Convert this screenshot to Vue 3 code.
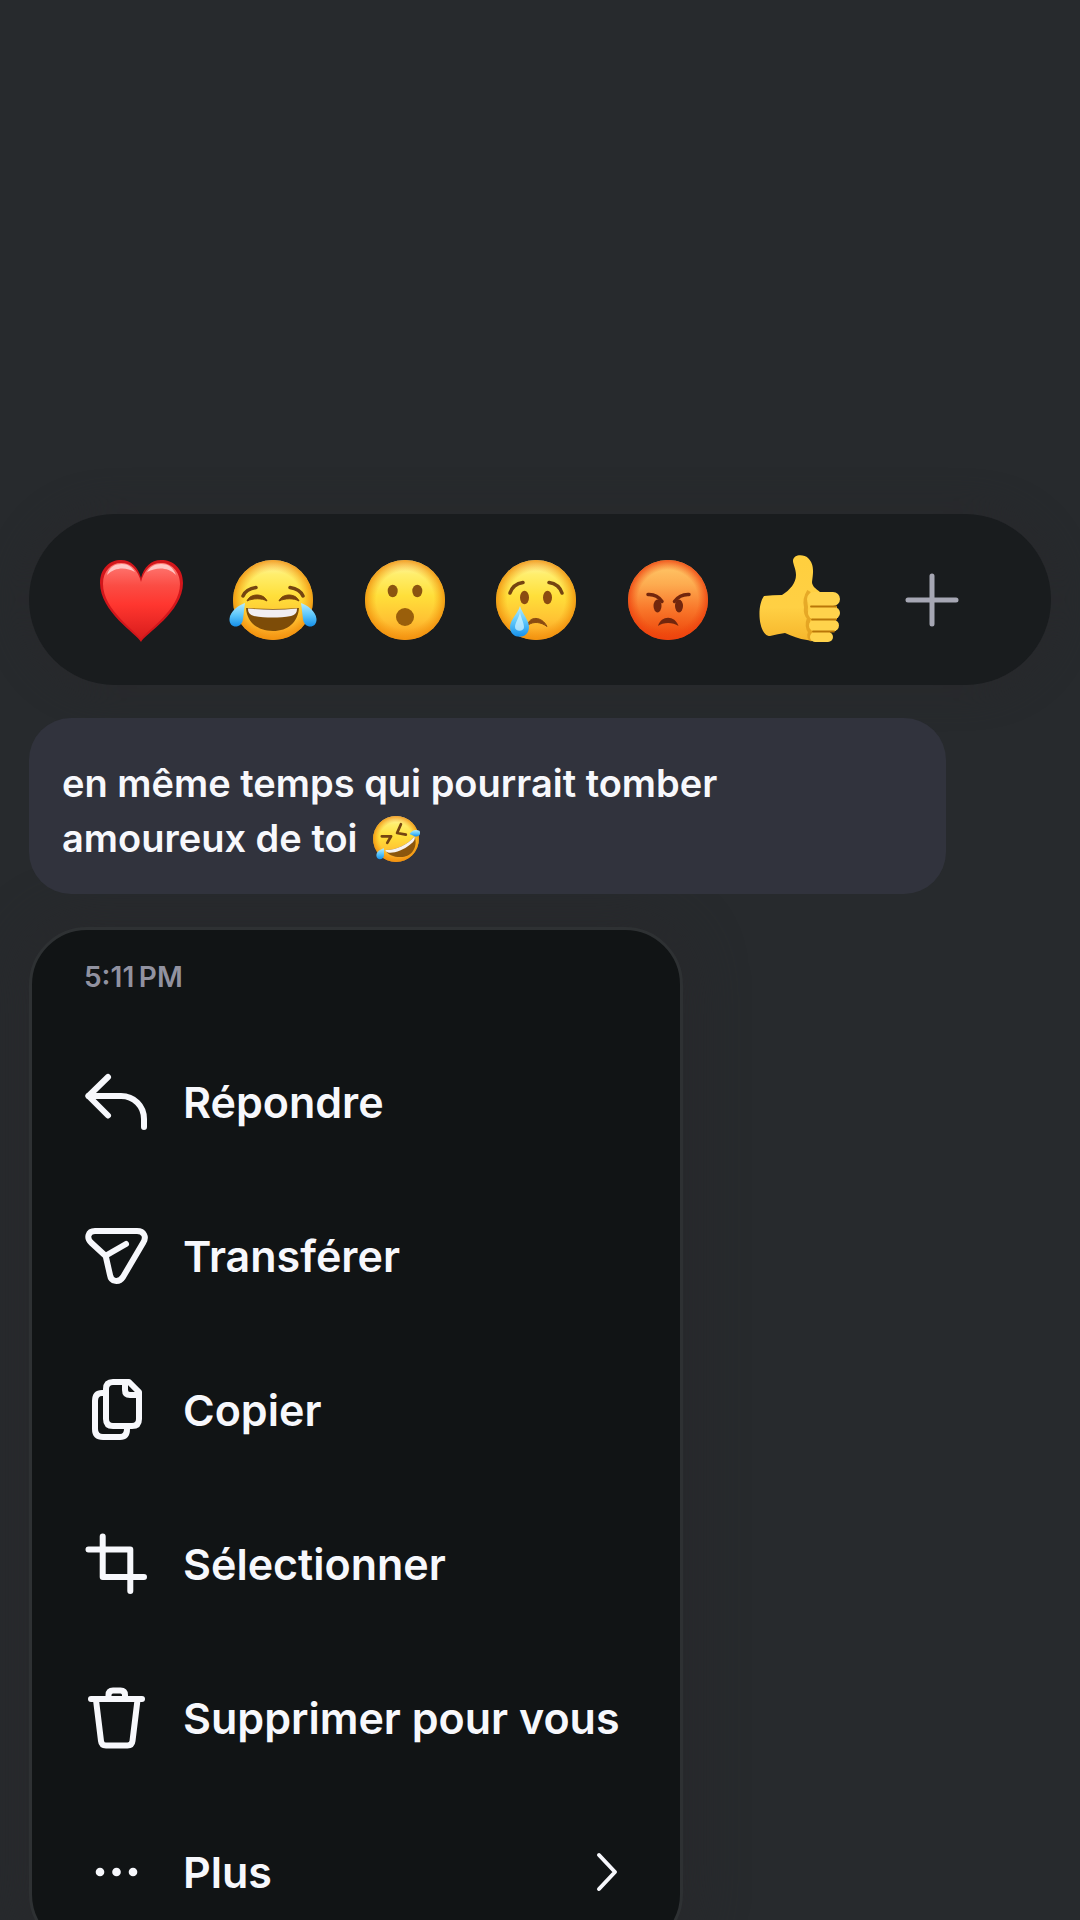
<template>
  <main class="overlay">
    <svg class="defs" width="0" height="0" aria-hidden="true">
      <defs>
        <linearGradient id="face" x1="0" y1="0" x2="0" y2="1">
          <stop offset="0" stop-color="#fff6b4" />
          <stop offset="0.18" stop-color="#ffee6c" />
          <stop offset="0.45" stop-color="#ffdf3a" />
          <stop offset="0.75" stop-color="#ffc233" />
          <stop offset="1" stop-color="#f99a1c" />
        </linearGradient>
        <radialGradient id="rim" cx="0.5" cy="0.5" r="0.5">
          <stop offset="0.72" stop-color="#f59a10" stop-opacity="0" />
          <stop offset="1" stop-color="#f0900c" stop-opacity="0.85" />
        </radialGradient>
        <linearGradient id="anger" x1="0" y1="0" x2="0" y2="1">
          <stop offset="0" stop-color="#ffcc6c" />
          <stop offset="0.3" stop-color="#fdac50" />
          <stop offset="0.6" stop-color="#f9792c" />
          <stop offset="1" stop-color="#ec4107" />
        </linearGradient>
        <radialGradient id="anger-rim" cx="0.5" cy="0.5" r="0.5">
          <stop offset="0.75" stop-color="#f04a10" stop-opacity="0" />
          <stop offset="1" stop-color="#ee4310" stop-opacity="0.85" />
        </radialGradient>
        <linearGradient id="tear" x1="0" y1="0" x2="0" y2="1">
          <stop offset="0" stop-color="#b5ecff" />
          <stop offset="0.5" stop-color="#5fc8fb" />
          <stop offset="1" stop-color="#1690ea" />
        </linearGradient>
        <linearGradient id="heart" x1="0" y1="0" x2="0" y2="1">
          <stop offset="0" stop-color="#ff7a74" />
          <stop offset="0.3" stop-color="#fb4c44" />
          <stop offset="0.55" stop-color="#ff362f" />
          <stop offset="1" stop-color="#d81c1c" />
        </linearGradient>
        <linearGradient id="hand" x1="0" y1="0" x2="0" y2="1">
          <stop offset="0" stop-color="#ffcf3e" />
          <stop offset="0.6" stop-color="#ffd044" />
          <stop offset="1" stop-color="#f6b52b" />
        </linearGradient>
      </defs>
    </svg>

    <div class="reactions">
      <button class="reaction" aria-label="J’adore">
        <svg viewBox="0 0 88 88">
          <path d="M44 86C40 78 3 56 3 27C3 12 13 4 24 4C34 4 41 11 44 22C47 11 54 4 64 4C76 4 86 12 86 27C86 56 48 78 44 86Z" fill="#d3161b" />
          <path d="M44 83C39 75 6 54 6 28C6 15 14 7 24 7C34 7 41 14 44 26C47 14 54 7 64 7C74 7 83 15 83 28C83 54 49 75 44 83Z" fill="url(#heart)" />
          <path d="M10 19C12 11 18 8 25 8C31 8 35 11 38 16C29 11 18 11 10 19ZM50 16C53 11 57 8 64 8C71 8 76 11 79 19C71 11 60 11 50 16Z" fill="#fff" opacity="0.6" />
        </svg>
      </button>
      <button class="reaction" aria-label="Haha">
        <svg viewBox="0 0 88 88">
          <circle cx="44" cy="44" r="40" fill="url(#face)" />
          <circle cx="44" cy="44" r="40" fill="url(#rim)" />
          <path d="M14 40Q17 33 27 31.500M61 31.500Q71 33 74 40" class="feature" />
          <path d="M18 45C21 37 35 37 38 45C33 42 24 42 18 45ZM50 45C53 37 67 37 70 45C65 42 56 42 50 45Z" fill="#79450b" stroke="#79450b" stroke-linejoin="round" />
          <path d="M17 52Q44 54 70 52C69 66 59 75 44 75C28 75 18 66 17 52Z" fill="#7d4c08" />
          <path d="M19 52.500Q44 55 68 52.500C68 57 66 59 62 60C50 62 37 62 25 60C21 59 19 57 19 52.500Z" fill="#f1eef2" />
          <path d="M16 47C10 49 1 55 .500 63C0 73 13 73 14 63Z" fill="url(#tear)" />
          <path d="M72 47C78 49 87 55 87.500 63C88 73 75 73 74 63Z" fill="url(#tear)" />
        </svg>
      </button>
      <button class="reaction" aria-label="Wouah">
        <svg viewBox="0 0 88 88">
          <circle cx="44" cy="44" r="40" fill="url(#face)" />
          <circle cx="44" cy="44" r="40" fill="url(#rim)" />
          <ellipse cx="31.700" cy="35" rx="5" ry="6.200" fill="#8b5410" />
          <ellipse cx="56.300" cy="35" rx="5" ry="6.200" fill="#8b5410" />
          <circle cx="44" cy="61" r="9" fill="#9a5f0b" />
        </svg>
      </button>
      <button class="reaction" aria-label="Triste">
        <svg viewBox="0 0 88 88">
          <circle cx="44" cy="44" r="40" fill="url(#face)" />
          <circle cx="44" cy="44" r="40" fill="url(#rim)" />
          <path d="M18 37Q21 28 31 26.500M57 26.500Q67 28 70 37" class="feature" />
          <ellipse cx="32.500" cy="41.500" rx="4.500" ry="6.800" fill="#8b4b11" />
          <ellipse cx="55.500" cy="41.500" rx="4.500" ry="6.800" fill="#8b4b11" />
          <path d="M36 69C37 60 50 60 55 70.500C49 66 42 65 36 69Z" fill="#8b4b11" stroke="#8b4b11" stroke-linejoin="round" />
          <path d="M28 50C26 57 18 64 18 71C18 84 37 84 37 71C37 64 30 57 28 50Z" fill="url(#tear)" />
          <path d="M28 56C27 62 23 67 23 71C23 76 32 76 32 71C32 67 29 62 28 56Z" fill="#d9f6ff" opacity="0.7" />
        </svg>
      </button>
      <button class="reaction" aria-label="Grrr">
        <svg viewBox="0 0 88 88">
          <circle cx="44" cy="44" r="40" fill="url(#anger)" />
          <circle cx="44" cy="44" r="40" fill="url(#anger-rim)" />
          <ellipse cx="33.500" cy="50" rx="4" ry="6.500" fill="#72260d" />
          <ellipse cx="55" cy="50" rx="4" ry="6.500" fill="#72260d" />
          <path d="M24 38.500Q33 38 38 45.500M65 38.500Q56 38 50.500 45.500" class="feature angry" />
          <path d="M34 70C37 59 51 59 54.500 70C49 66 39 66 34 70Z" fill="#72260d" />
        </svg>
      </button>
      <button class="reaction" aria-label="J’aime">
        <svg viewBox="0 0 88 88">
          <path d="M8 40Q17 39 26 39C34 34 40 27 40 19C40 13 37 8 37 5C37 -2 48 -2 52 2C59 9 57 17 56 26C56 30 60 33 64 36L72 84C68 87 60 86 51 84C43 83 36 80 29 77Q22 78 14 80C3 80 0 51 8 40Z" fill="url(#hand)" />
          <path d="M53 35Q48 43 50 51Q49 58 53 62Q50 70 54 76Q52 82 56 84" fill="none" stroke="#d99518" stroke-width="4" opacity="0.65" />
          <path d="M58 36H77V50H81V63H80V75H74V85H58Z" fill="#f3b62c" />
          <rect x="51" y="36" width="33" height="14" rx="7" fill="#ffd34c" />
          <rect x="52" y="51" width="32" height="12" rx="6" fill="#ffd34c" />
          <rect x="53" y="64" width="30" height="11" rx="5.500" fill="#ffd34c" />
          <rect x="54" y="76" width="23" height="10" rx="5" fill="#ffd34c" />
          <path d="M55 50.500H80M56 63.500H80M57 75.500H78" stroke="#b97608" stroke-width="1.800" stroke-linecap="round" />
        </svg>
      </button>
      <button class="reaction" aria-label="Ajouter une réaction">
        <svg viewBox="0 0 88 88">
          <path d="M44 20V68M20 44H68" fill="none" stroke="#a6a7b4" stroke-width="5" stroke-linecap="round" />
        </svg>
      </button>
    </div>

    <p class="message">
      en même temps qui pourrait tomber<br />
      amoureux de toi
      <svg class="emoji" viewBox="0 0 88 88" role="img" aria-label="🤣">
        <circle cx="44" cy="44" r="42" fill="url(#face)" />
        <circle cx="44" cy="44" r="42" fill="url(#rim)" />
        <path d="M18 39L35 39L28 51M53 17L46 33L62 36" class="feature squint" />
        <path d="M24 64C43 65 65 55 78 39C85 58 73 76 56 77C41 78 29 73 24 64Z" fill="#8b560d" />
        <path d="M24 64C43 65 65 55 78 39C80 45 76 50 70 54C58 64 42 70 31 69C27 68 25 67 24 64Z" fill="#f6f2f0" />
        <path d="M22 61C14 64 8 67 8 75C10 84 20 82 22 75Z" fill="url(#tear)" />
        <path d="M69 35C72 29 79 25 87 29C91 37 84 41 78 39Z" fill="url(#tear)" />
      </svg>
    </p>

    <nav class="menu">
      <time class="time">5:11&#8201;PM</time>
      <button v-for="item in items" :key="item.label" class="item">
        <svg class="icon" viewBox="0 0 64 64" aria-hidden="true">
          <path v-for="d in item.paths" :key="d" :d="d" :class="{ dots: item.more }" />
        </svg>
        <span>{{ item.label }}</span>
        <svg v-if="item.more" class="chevron" viewBox="0 0 24 40" aria-hidden="true">
          <path d="M4 3L20 20L4 37" />
        </svg>
      </button>
    </nav>
  </main>
</template>

<script setup>
const items = [
  {
    label: 'Répondre',
    paths: ['M24 7L4.500 26L24 45.500', 'M4.500 26H37C50 26 60 36 60 49V57']
  },
  {
    label: 'Transférer',
    paths: [
      'M11 7H53C60 7 63 13 59 19L39 53C35 59 27 58 26 51L21.700 32L7.500 19C2 14 4 7 11 7Z',
      'M22 31.500L42 20'
    ]
  },
  {
    label: 'Copier',
    paths: [
      'M29 4H45L55 14V41Q55 48 48 48H29Q22 48 22 41V11Q22 4 29 4Z',
      'M41 5V12Q41 17 46 17H54',
      'M22 15H18Q11 15 11 23V51Q11 59 19 59H36Q43 59 43 51V49'
    ]
  },
  {
    label: 'Sélectionner',
    paths: ['M18.700 4.500V45H60', 'M4.500 17.500H46.300V59']
  },
  {
    label: 'Supprimer pour vous',
    paths: [
      'M7 13H58',
      'M24.500 12V9Q24.500 4.500 29 4.500H36.500Q41 4.500 41 9V12',
      'M12 14L17 55Q17.500 59.500 22 59.500H43.500Q48 59.500 48.500 55L53.500 14'
    ]
  },
  {
    label: 'Plus',
    more: true,
    paths: ['M16 32H16.010', 'M32.500 32H32.510', 'M49 32H49.010']
  }
]
</script>

<style>
body {
  margin: 0;
  background: #272a2d;
}
</style>

<style scoped>
.overlay {
  box-sizing: border-box;
  height: 100vh;
  overflow: hidden;
  padding: 514px 29px 0;
  display: flex;
  flex-direction: column;
  align-items: flex-start;
  background: #272a2d;
  color: #f7f8fc;
  font-family: Inter, "Liberation Sans", sans-serif;
}

.defs {
  position: absolute;
}

button {
  border: 0;
  padding: 0;
  background: none;
  color: inherit;
  font: inherit;
  cursor: pointer;
}

.reactions {
  box-sizing: border-box;
  width: 100%;
  flex-shrink: 0;
  display: flex;
  justify-content: space-between;
  padding: 42px 75px 41px 68px;
  border-radius: 86px;
  background: #191c1e;
  box-shadow: 0 0 32px 8px #28292c;
}

.reaction svg {
  display: block;
  width: 88px;
  height: 88px;
  overflow: visible;
}

.feature {
  fill: none;
  stroke: #744411;
  stroke-width: 3.5;
  stroke-linecap: round;
}

.angry {
  stroke: #72260d;
}

.squint {
  stroke-width: 5;
  stroke-linejoin: round;
}

.message {
  position: relative;
  box-sizing: border-box;
  width: 100%;
  max-width: 917px;
  flex-shrink: 0;
  margin: 33px 0;
  padding: 38px 33px 28px;
  border-radius: 42px;
  background: #31333d;
  font-size: 38px;
  font-weight: 600;
  line-height: 55px;
}

.emoji {
  width: 48px;
  height: 48px;
  margin: -8px 0 -8px 5px;
  vertical-align: -3px;
}

.menu {
  box-sizing: border-box;
  width: 654px;
  max-width: 100%;
  flex-shrink: 0;
  display: flex;
  flex-direction: column;
  border: 3px solid #2e3133;
  border-radius: 58px;
  background: #111415;
  box-shadow: 0 0 48px 12px #28292c;
}

.time {
  padding: 30px 52px 31px;
  font-size: 28px;
  font-weight: 600;
  line-height: 34px;
  color: #9192a0;
}

.item {
  display: flex;
  align-items: center;
  gap: 35px;
  height: 154px;
  padding: 0 61px 0 52px;
  font-size: 43px;
  font-weight: 600;
  text-align: left;
  white-space: nowrap;
}

.icon {
  flex-shrink: 0;
  width: 64px;
  height: 64px;
}

.icon path,
.chevron path {
  fill: none;
  stroke: #f7f8fc;
  stroke-width: 6;
  stroke-linecap: round;
  stroke-linejoin: round;
}

.icon .dots {
  stroke-width: 8.6;
}

.chevron {
  width: 24px;
  height: 40px;
  margin-left: auto;
}

.chevron path {
  stroke-width: 4;
}
</style>
